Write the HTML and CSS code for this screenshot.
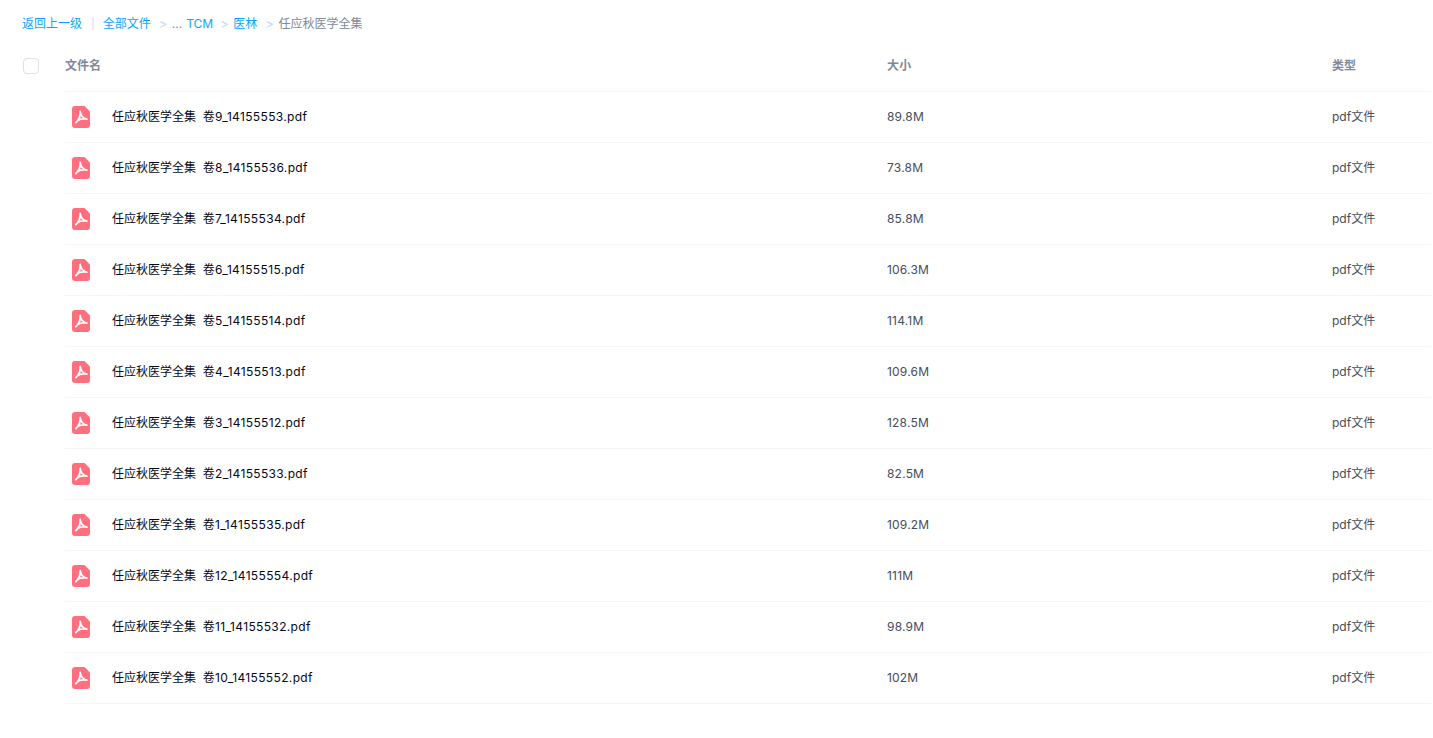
FILE: index.html
```html
<!DOCTYPE html>
<html lang="zh-CN">
<head>
    <meta charset="UTF-8">
    <title>任应秋医学全集</title>
    <link rel="stylesheet" href="styles.css">
</head>
<body>
    <div class="crumbs">
        <a>返回上一级</a>
        <span class="pipe">|</span>
        <a>全部文件</a>
        <span class="sep">&gt;</span>
        <span class="dots">...</span>
        <a class="tcm">TCM</a>
        <span class="sep">&gt;</span>
        <a>医林</a>
        <span class="sep">&gt;</span>
        <span class="current">任应秋医学全集</span>
    </div>

    <div class="list">
        <div class="check-col"><span class="checkbox"></span></div>
        <div class="table">
            <div class="row head">
                <div class="name">文件名</div>
                <div class="size">大小</div>
                <div class="type">类型</div>
            </div>
            <div class="row"><div class="name"><svg class="icon" viewBox="0 0 18 22"><use href="#pdf"/></svg>任应秋医学全集&nbsp;&nbsp;<span class="vol">卷9_14155553.pdf</span></div><div class="size">89.8M</div><div class="type">pdf文件</div></div>
            <div class="row"><div class="name"><svg class="icon" viewBox="0 0 18 22"><use href="#pdf"/></svg>任应秋医学全集&nbsp;&nbsp;<span class="vol">卷8_14155536.pdf</span></div><div class="size">73.8M</div><div class="type">pdf文件</div></div>
            <div class="row"><div class="name"><svg class="icon" viewBox="0 0 18 22"><use href="#pdf"/></svg>任应秋医学全集&nbsp;&nbsp;<span class="vol">卷7_14155534.pdf</span></div><div class="size">85.8M</div><div class="type">pdf文件</div></div>
            <div class="row"><div class="name"><svg class="icon" viewBox="0 0 18 22"><use href="#pdf"/></svg>任应秋医学全集&nbsp;&nbsp;<span class="vol">卷6_14155515.pdf</span></div><div class="size">106.3M</div><div class="type">pdf文件</div></div>
            <div class="row"><div class="name"><svg class="icon" viewBox="0 0 18 22"><use href="#pdf"/></svg>任应秋医学全集&nbsp;&nbsp;<span class="vol">卷5_14155514.pdf</span></div><div class="size">114.1M</div><div class="type">pdf文件</div></div>
            <div class="row"><div class="name"><svg class="icon" viewBox="0 0 18 22"><use href="#pdf"/></svg>任应秋医学全集&nbsp;&nbsp;<span class="vol">卷4_14155513.pdf</span></div><div class="size">109.6M</div><div class="type">pdf文件</div></div>
            <div class="row"><div class="name"><svg class="icon" viewBox="0 0 18 22"><use href="#pdf"/></svg>任应秋医学全集&nbsp;&nbsp;<span class="vol">卷3_14155512.pdf</span></div><div class="size">128.5M</div><div class="type">pdf文件</div></div>
            <div class="row"><div class="name"><svg class="icon" viewBox="0 0 18 22"><use href="#pdf"/></svg>任应秋医学全集&nbsp;&nbsp;<span class="vol">卷2_14155533.pdf</span></div><div class="size">82.5M</div><div class="type">pdf文件</div></div>
            <div class="row"><div class="name"><svg class="icon" viewBox="0 0 18 22"><use href="#pdf"/></svg>任应秋医学全集&nbsp;&nbsp;<span class="vol">卷1_14155535.pdf</span></div><div class="size">109.2M</div><div class="type">pdf文件</div></div>
            <div class="row"><div class="name"><svg class="icon" viewBox="0 0 18 22"><use href="#pdf"/></svg>任应秋医学全集&nbsp;&nbsp;<span class="vol">卷12_14155554.pdf</span></div><div class="size">111M</div><div class="type">pdf文件</div></div>
            <div class="row"><div class="name"><svg class="icon" viewBox="0 0 18 22"><use href="#pdf"/></svg>任应秋医学全集&nbsp;&nbsp;<span class="vol">卷11_14155532.pdf</span></div><div class="size">98.9M</div><div class="type">pdf文件</div></div>
            <div class="row"><div class="name"><svg class="icon" viewBox="0 0 18 22"><use href="#pdf"/></svg>任应秋医学全集&nbsp;&nbsp;<span class="vol">卷10_14155552.pdf</span></div><div class="size">102M</div><div class="type">pdf文件</div></div>
        </div>
    </div>

    <svg class="defs" width="0" height="0">
        <symbol id="pdf" viewBox="0 0 18 22">
            <path d="M3 0H12.5L18 5.5V19a3 3 0 0 1-3 3H3a3 3 0 0 1-3-3V3a3 3 0 0 1 3-3Z" fill="#ff6f7d"/>
            <path d="M8.2 5.5C8.6 9 10.6 12 14.8 13.2M8.2 5.5C8.6 9.4 7 13.8 3.8 16.6M5.6 14.4C8 13 10.8 12.6 13.6 12.9" fill="none" stroke="#fff" stroke-width="1.8" stroke-linecap="round"/>
        </symbol>
    </svg>
</body>
</html>
```

FILE: styles.css
```css
body {
    margin: 0;
    background: #fff;
    font-family: Inter, "Noto Sans CJK SC", sans-serif;
    font-size: 12px;
    line-height: 16px;
    color: #03081a;
    overflow: hidden;
}
.crumbs {
    display: flex;
    align-items: center;
    height: 16px;
    padding: 16px 0 0 22px;
    margin-bottom: -1px;
    color: #06a7ff;
    white-space: nowrap;
}
.pipe {
    margin: 0 8px 0 9px;
    font-size: 11px;
    color: #c4d8f4;
}
.sep {
    margin: 0 4.5px 0 8px;
    font-size: 13px;
    color: #c4d8f4;
}
.dots {
    color: #818999;
    margin-right: 4px;
}
.tcm {
    margin-right: -1px;
}
.current {
    color: #818999;
}
.list {
    display: flex;
    margin-top: 8px;
}
.check-col {
    width: 65px;
    flex-shrink: 0;
}
.checkbox {
    display: block;
    box-sizing: border-box;
    width: 16px;
    height: 16px;
    margin: 19px 0 0 23px;
    border: 1px solid #dfe1ea;
    border-radius: 4px;
}
.table {
    width: 1366px;
}
.row {
    display: grid;
    grid-template-columns: 822px 445px 1fr;
    align-items: center;
    height: 50px;
    border-bottom: 1px solid #f5f6f8;
}
.row.head {
    height: 50px;
    padding-top: 2px;
    font-weight: 700;
    color: #818999;
}
.name {
    display: flex;
    align-items: center;
}
.vol {
    letter-spacing: 0.35px;
}
.icon {
    width: 18px;
    height: 22px;
    margin: 0 22px 0 7px;
    flex-shrink: 0;
}
.size, .type {
    color: #454d5a;
}
.size {
    letter-spacing: 0.2px;
}
.head .size, .head .type {
    color: #818999;
}
.defs {
    position: absolute;
}
```
